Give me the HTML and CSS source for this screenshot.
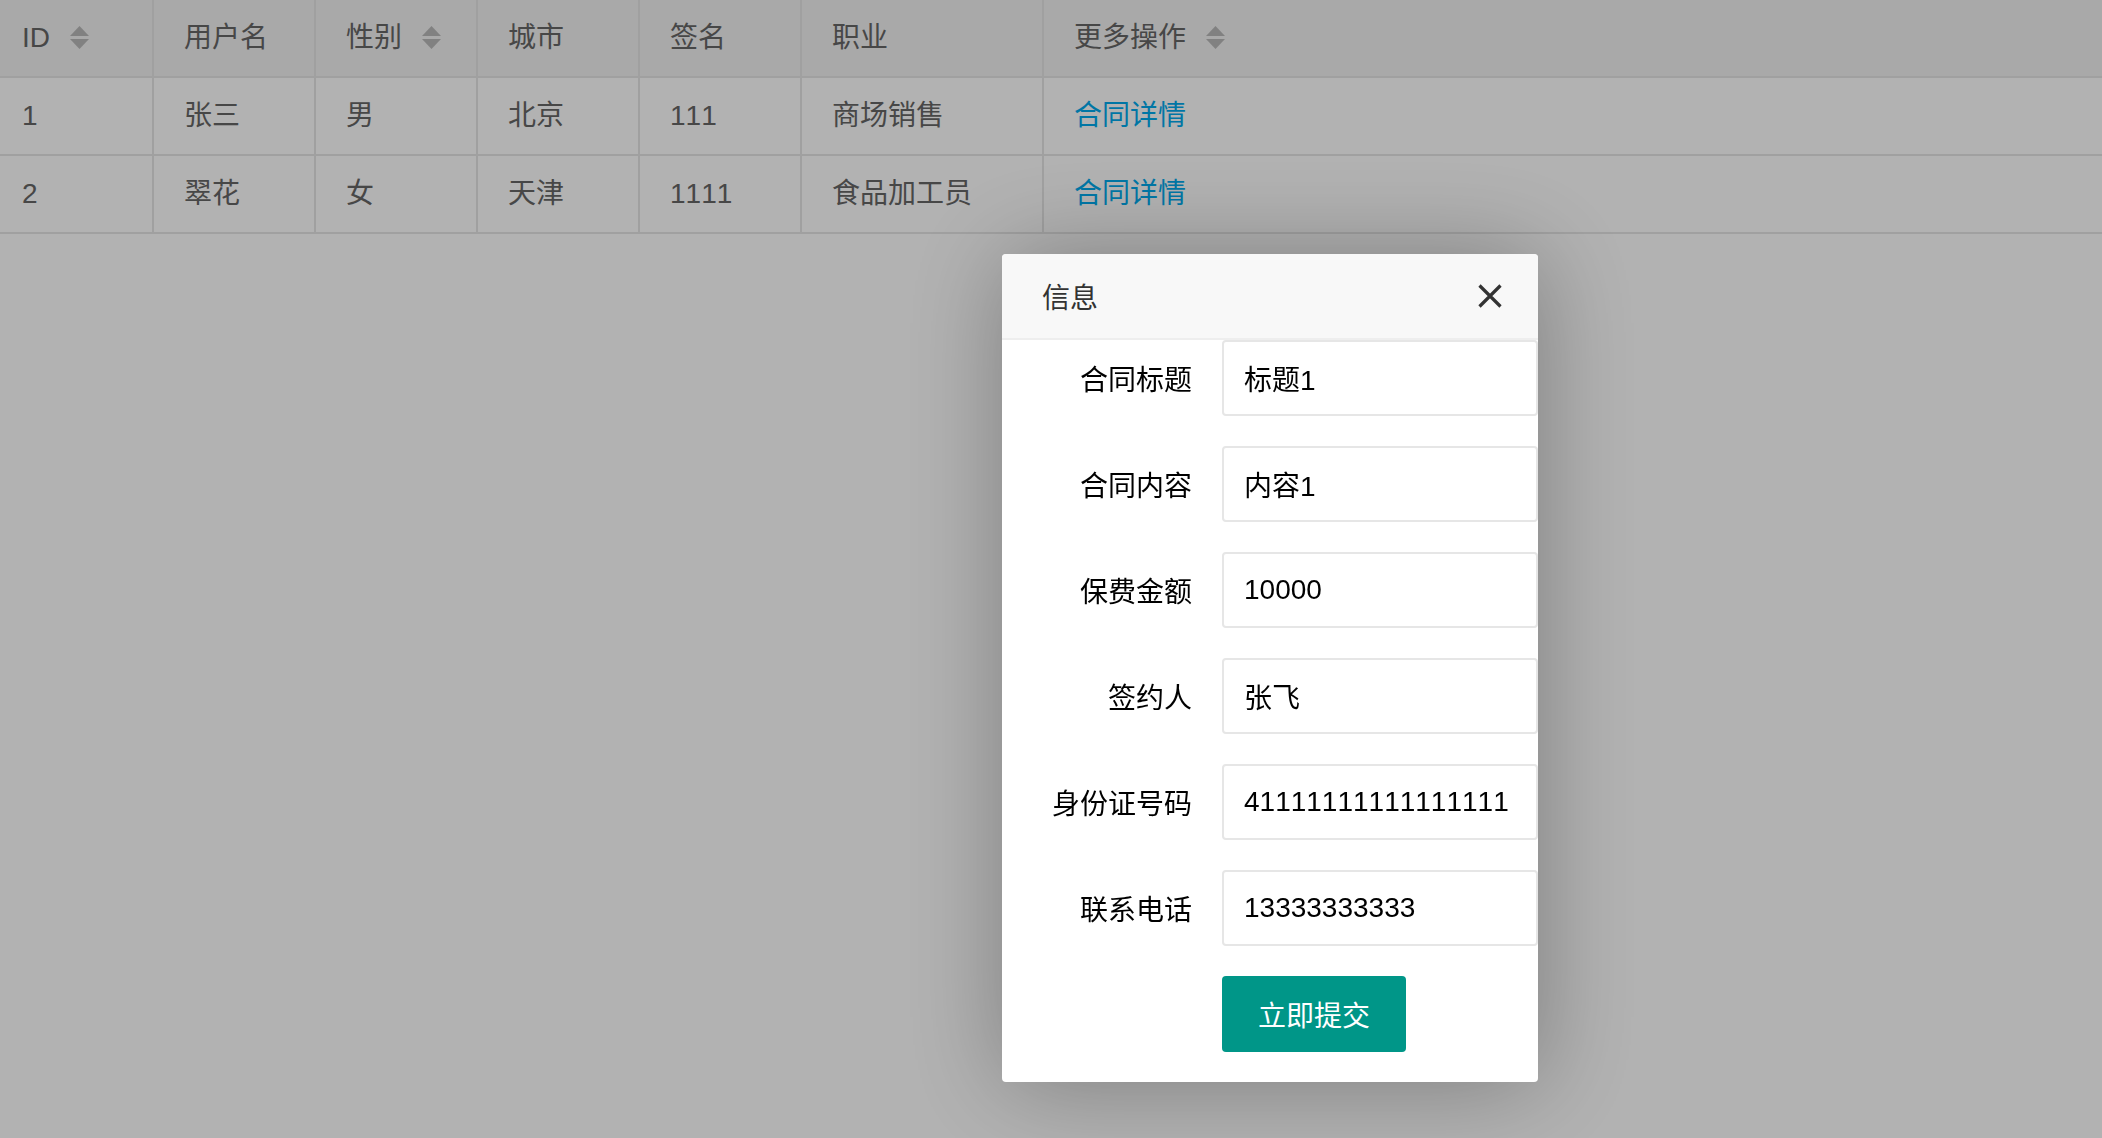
FILE: index.html
```html
<!DOCTYPE html>
<html lang="zh-CN">
<head>
<meta charset="utf-8">
<title>合同列表</title>
<link rel="stylesheet" href="styles.css">
</head>
<body>
<table class="data-table">
  <thead>
    <tr>
      <th class="c-id">ID<svg class="sort" width="19" height="23" viewBox="0 0 19 23"><polygon points="0,10 9.5,0 19,10"/><polygon points="0,13 9.5,23 19,13"/></svg></th>
      <th class="c-n">用户名</th>
      <th class="c-n">性别<svg class="sort" width="19" height="23" viewBox="0 0 19 23"><polygon points="0,10 9.5,0 19,10"/><polygon points="0,13 9.5,23 19,13"/></svg></th>
      <th class="c-n">城市</th>
      <th class="c-n">签名</th>
      <th class="c-w">职业</th>
      <th class="c-last">更多操作<svg class="sort" width="19" height="23" viewBox="0 0 19 23"><polygon points="0,10 9.5,0 19,10"/><polygon points="0,13 9.5,23 19,13"/></svg></th>
    </tr>
  </thead>
  <tbody>
    <tr>
      <td class="c-id">1</td>
      <td>张三</td>
      <td>男</td>
      <td>北京</td>
      <td>111</td>
      <td>商场销售</td>
      <td class="c-last"><a class="link" href="#">合同详情</a></td>
    </tr>
    <tr>
      <td class="c-id">2</td>
      <td>翠花</td>
      <td>女</td>
      <td>天津</td>
      <td>1111</td>
      <td>食品加工员</td>
      <td class="c-last"><a class="link" href="#">合同详情</a></td>
    </tr>
  </tbody>
</table>

<div class="shade"></div>

<div class="dialog">
  <div class="dialog-title">
    <span>信息</span>
    <svg class="close" width="24" height="24" viewBox="0 0 24 24"><path d="M1.5 1.5L22.5 22.5M22.5 1.5L1.5 22.5"/></svg>
  </div>
  <form class="form">
    <div class="form-item">
      <label class="form-label">合同标题</label>
      <div class="input-block"><input class="input" type="text" value="标题1"></div>
    </div>
    <div class="form-item">
      <label class="form-label">合同内容</label>
      <div class="input-block"><input class="input" type="text" value="内容1"></div>
    </div>
    <div class="form-item">
      <label class="form-label">保费金额</label>
      <div class="input-block"><input class="input" type="text" value="10000"></div>
    </div>
    <div class="form-item">
      <label class="form-label">签约人</label>
      <div class="input-block"><input class="input" type="text" value="张飞"></div>
    </div>
    <div class="form-item">
      <label class="form-label">身份证号码</label>
      <div class="input-block"><input class="input" type="text" value="41111111111111111"></div>
    </div>
    <div class="form-item">
      <label class="form-label">联系电话</label>
      <div class="input-block"><input class="input" type="text" value="13333333333"></div>
    </div>
    <div class="form-item form-actions">
      <button class="btn" type="button">立即提交</button>
    </div>
  </form>
</div>
</body>
</html>
```

FILE: styles.css
```css
* {
  box-sizing: border-box;
}

html, body {
  margin: 0;
  padding: 0;
  background: #fff;
  font-family: "Liberation Sans", Arial, "Noto Sans CJK SC", sans-serif;
  font-kerning: none;
}

.data-table {
  width: 100%;
  table-layout: fixed;
  border-collapse: separate;
  border-spacing: 0;
  font-size: 28px;
  color: #666;
}

.data-table th,
.data-table td {
  height: 78px;
  padding: 0 30px;
  line-height: 76px;
  text-align: left;
  font-weight: normal;
  white-space: nowrap;
  border-right: 2px solid #e6e6e6;
  border-bottom: 2px solid #e6e6e6;
  vertical-align: middle;
}

.data-table thead th {
  background: #f2f2f2;
}

.data-table .c-id {
  width: 154px;
  padding-left: 22px;
}

.data-table .c-n {
  width: 162px;
}

.data-table .c-w {
  width: 242px;
}

.data-table .c-last {
  border-right: none;
}

.sort {
  display: inline-block;
  vertical-align: middle;
  margin-left: 20px;
  margin-top: -4px;
  fill: #b9b9b9;
}

.link {
  color: #01aaed;
  text-decoration: none;
}

.shade {
  position: fixed;
  inset: 0;
  background: rgba(0, 0, 0, 0.3);
}

.dialog {
  position: fixed;
  left: 1002px;
  top: 254px;
  width: 536px;
  background: #fff;
  border-radius: 4px;
  box-shadow: 2px 2px 100px rgba(0, 0, 0, 0.3);
  overflow: hidden;
}

.dialog-title {
  height: 86px;
  padding: 0 36px 0 40px;
  display: flex;
  align-items: center;
  justify-content: space-between;
  background: #f8f8f8;
  border-bottom: 2px solid #eee;
  font-size: 28px;
  color: #333;
}

.close {
  display: block;
  stroke: #333;
  stroke-width: 3.2;
  fill: none;
}

.form {
  margin: 0;
  padding: 0;
}

.form-item {
  display: flex;
  align-items: center;
  margin-bottom: 30px;
}

.form-label {
  width: 220px;
  padding-right: 30px;
  text-align: right;
  font-size: 28px;
  color: #000;
  white-space: nowrap;
}

.input-block {
  flex: 1;
}

.input {
  display: block;
  width: 100%;
  height: 76px;
  padding: 0 20px;
  border: 2px solid #e6e6e6;
  border-radius: 4px;
  background: #fff;
  font-family: "Liberation Sans", Arial, "Noto Sans CJK SC", sans-serif;
  font-kerning: none;
  font-size: 28px;
  color: #000;
  outline: none;
}

.form-actions {
  padding-left: 220px;
}

.btn {
  width: 184px;
  height: 76px;
  border: none;
  border-radius: 4px;
  background: #009688;
  color: #fff;
  font-family: "Liberation Sans", Arial, "Noto Sans CJK SC", sans-serif;
  font-size: 28px;
  padding: 0;
  cursor: pointer;
}
```
